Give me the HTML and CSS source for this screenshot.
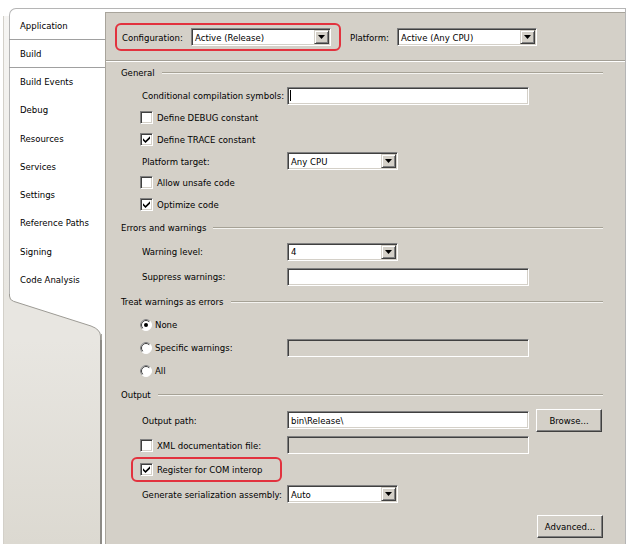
FILE: index.html
```html
<!DOCTYPE html>
<html>
<head>
<meta charset="utf-8">
<link rel="stylesheet" href="styles.css">
</head>
<body>
<div class="window">
  <div class="side">
    <div class="tabwrap">
      <div class="gutter"></div>
      <ul class="tabs">
        <li>Application</li>
        <li class="sel">Build</li>
        <li>Build Events</li>
        <li>Debug</li>
        <li>Resources</li>
        <li>Services</li>
        <li>Settings</li>
        <li>Reference Paths</li>
        <li>Signing</li>
        <li>Code Analysis</li>
      </ul>
    </div>
    <svg class="slant" width="102" height="46" viewBox="0 0 102 46">
      <path d="M0 0 H6.5 V2 Q6.5 6 10.5 7.3 L88 32 Q97.5 35.5 97.5 42 V46 H0 Z" fill="#e8e6e1"/>
      <path d="M6.5 0 V2 Q6.5 6 10.5 7.3 L88 32 Q97.5 35.5 97.5 42 V46" fill="none" stroke="#9d9b95"/>
      <path d="M98.5 40 V46" fill="none" stroke="#a9a7a1"/>
      <path d="M0.5 0 V46" fill="none" stroke="#d3d0c9"/>
    </svg>
    <div class="sidefoot"></div>
  </div>
  <div class="main">
    <div class="panel">
      <div class="toolbar">
        <div class="hl">
          <span class="tlbl cfg">Configuration:</span>
          <div class="box combo w140"><span>Active (Release)</span><i class="arrow"><svg width="7" height="4" viewBox="0 0 7 4"><path d="M0 0 H7 L3.5 4 Z" fill="#000"/></svg></i></div>
        </div>
        <span class="tlbl plat">Platform:</span>
        <div class="box combo w140"><span>Active (Any CPU)</span><i class="arrow"><svg width="7" height="4" viewBox="0 0 7 4"><path d="M0 0 H7 L3.5 4 Z" fill="#000"/></svg></i></div>
      </div>

      <div class="form">
        <div class="sec"><span>General</span><i class="rule"></i></div>
        <div class="row field"><span class="fl">Conditional compilation symbols:</span><div class="box w242"><i class="caret"></i></div></div>
        <div class="row opt"><span class="cb"></span><span>Define DEBUG constant</span></div>
        <div class="row opt"><span class="cb"><svg width="7" height="7" viewBox="0 0 7 7"><polygon points="0,2.3 2.5,4.8 7,0.3 7,2.8 2.5,7 0,4.6" fill="#000"/></svg></span><span>Define TRACE constant</span></div>
        <div class="row field"><span class="fl">Platform target:</span><div class="box combo w111"><span>Any CPU</span><i class="arrow"><svg width="7" height="4" viewBox="0 0 7 4"><path d="M0 0 H7 L3.5 4 Z" fill="#000"/></svg></i></div></div>
        <div class="row opt"><span class="cb"></span><span>Allow unsafe code</span></div>
        <div class="row opt"><span class="cb"><svg width="7" height="7" viewBox="0 0 7 7"><polygon points="0,2.3 2.5,4.8 7,0.3 7,2.8 2.5,7 0,4.6" fill="#000"/></svg></span><span>Optimize code</span></div>

        <div class="sec"><span>Errors and warnings</span><i class="rule"></i></div>
        <div class="row field"><span class="fl">Warning level:</span><div class="box combo w111"><span>4</span><i class="arrow"><svg width="7" height="4" viewBox="0 0 7 4"><path d="M0 0 H7 L3.5 4 Z" fill="#000"/></svg></i></div></div>
        <div class="row field"><span class="fl">Suppress warnings:</span><div class="box w242"></div></div>

        <div class="sec"><span>Treat warnings as errors</span><i class="rule"></i></div>
        <div class="row opt"><svg class="rd" width="12" height="12" viewBox="0 0 12 12"><circle cx="6" cy="6" r="5.5" fill="#fff" stroke="#fff"/><path d="M9.9 2.1 A5.5 5.5 0 0 0 2.1 9.9" fill="none" stroke="#808080"/><path d="M9.2 2.8 A4.5 4.5 0 0 0 2.8 9.2" fill="none" stroke="#404040"/><circle cx="6" cy="6" r="2" fill="#000"/></svg><span>None</span></div>
        <div class="row opt"><span class="optl"><svg class="rd" width="12" height="12" viewBox="0 0 12 12"><circle cx="6" cy="6" r="5.5" fill="#fff" stroke="#fff"/><path d="M9.9 2.1 A5.5 5.5 0 0 0 2.1 9.9" fill="none" stroke="#808080"/><path d="M9.2 2.8 A4.5 4.5 0 0 0 2.8 9.2" fill="none" stroke="#404040"/></svg><span>Specific warnings:</span></span><div class="box dis w242"></div></div>
        <div class="row opt"><svg class="rd" width="12" height="12" viewBox="0 0 12 12"><circle cx="6" cy="6" r="5.5" fill="#fff" stroke="#fff"/><path d="M9.9 2.1 A5.5 5.5 0 0 0 2.1 9.9" fill="none" stroke="#808080"/><path d="M9.2 2.8 A4.5 4.5 0 0 0 2.8 9.2" fill="none" stroke="#404040"/></svg><span>All</span></div>

        <div class="sec"><span>Output</span><i class="rule"></i></div>
        <div class="row field"><span class="fl">Output path:</span><div class="box w242"><span>bin\Release\</span></div><button class="btn browse">Browse...</button></div>
        <div class="row opt"><span class="optl"><span class="cb"></span><span>XML documentation file:</span></span><div class="box dis w242"></div></div>
        <div class="row reg"><div class="hl hl2"><span class="cb"><svg width="7" height="7" viewBox="0 0 7 7"><polygon points="0,2.3 2.5,4.8 7,0.3 7,2.8 2.5,7 0,4.6" fill="#000"/></svg></span><span>Register for COM interop</span></div></div>
        <div class="row field"><span class="fl">Generate serialization assembly:</span><div class="box combo w111"><span>Auto</span><i class="arrow"><svg width="7" height="4" viewBox="0 0 7 4"><path d="M0 0 H7 L3.5 4 Z" fill="#000"/></svg></i></div></div>
        <div class="row last"><button class="btn">Advanced...</button></div>
      </div>
    </div>
  </div>
</div>
</body>
</html>
```

FILE: styles.css
```css
html, body {
  margin: 0;
  padding: 0;
  background: #fff;
}
body {
  width: 628px;
  height: 544px;
  overflow: hidden;
  font-family: "DejaVu Sans Condensed", "Liberation Sans", sans-serif;
  font-size: 9.5px;
  color: #000;
  white-space: nowrap;
}
.window {
  display: flex;
  margin-top: 8px;
  height: 536px;
}

/* ---- left tab strip ---- */
.side {
  width: 102px;
  margin-left: 3px;
  display: flex;
  flex-direction: column;
  background: #fff;
  flex: none;
}
.tabwrap {
  display: flex;
}
.gutter {
  width: 6px;
  box-sizing: border-box;
  border-left: 1px solid #d3d0c9;
  background: linear-gradient(#f6f5f3, #e8e6e1);
  margin-top: 8px;
}
.tabs {
  flex: 1;
  list-style: none;
  margin: 0;
  padding: 2px 0 0;
  border-top: 1px solid #b5b5b5;
  border-left: 1px solid #b5b5b5;
  border-top-left-radius: 7px;
  background: #fff;
}
.tabs li {
  height: 28.25px;
  box-sizing: border-box;
  display: flex;
  align-items: center;
  padding-left: 10px;
}
.tabs li.sel {
  border-top: 1px solid #a0a0a0;
  border-bottom: 1px solid #a0a0a0;
  margin-left: -1px;
  padding-left: 11px;
}
.slant {
  display: block;
  flex: none;
}
.sidefoot {
  flex: 1;
  margin-right: 1px;
  box-sizing: border-box;
  border-left: 1px solid #d3d0c9;
  border-right: 2px solid #8d8b86;
  background: linear-gradient(#e8e6e1, #dcd9d1);
  width: 99px;
}

/* ---- main panel ---- */
.main {
  width: 521px;
  box-sizing: border-box;
  border-top: 1px solid #b5b5b5;
  border-right: 1px solid #b5b5b5;
  padding-top: 3px;
  background: #fff;
  display: flex;
  flex-direction: column;
}
.panel {
  flex: 1;
  background: #d4d0c8;
  border-top: 1px solid #a8a49b;
  border-left: 1px solid #a8a49b;
  display: flex;
  flex-direction: column;
}
.toolbar {
  display: flex;
  align-items: center;
  padding: 10px 0 9px 9px;
  border-bottom: 1px solid #a39f96;
  box-shadow: 0 1px 0 #fff;
}
.hl {
  display: flex;
  align-items: center;
  border: 2px solid #e2323e;
  border-radius: 6px;
  padding: 3px 8px 3px 5px;
}
.tlbl.cfg {
  width: 69px;
}
.tlbl.plat {
  margin-left: 9px;
  width: 47px;
}

.form {
  flex: 1;
  display: grid;
  grid-template-rows: 23px 23px 21px 22px 22px 21px 22px 24px 25px 25px 24px 23px 23px 23px 25px 26px 24px 24px 26px 1fr;
}
.sec {
  display: flex;
  align-items: center;
  padding-left: 15px;
}
.rule {
  flex: 1;
  height: 0;
  border-top: 1px solid #a6a296;
  border-bottom: 1px solid #f4f3f0;
  margin: 1px 22px 0 7px;
}
.row {
  display: flex;
  align-items: center;
}
.field {
  padding-left: 36px;
}
.fl {
  width: 145px;
  flex: none;
}
.opt {
  padding-left: 34px;
}
.optl {
  width: 147px;
  flex: none;
  display: flex;
  align-items: center;
}
.reg {
  padding-left: 25px;
}
.hl2 {
  padding: 4px 18px 4px 7px;
}
.last {
  align-items: flex-start;
  justify-content: flex-end;
  padding-right: 22px;
  padding-top: 8px;
}

/* ---- controls ---- */
.cb {
  width: 13px;
  height: 13px;
  box-sizing: border-box;
  background: #fff;
  border: 1px solid;
  border-color: #808080 #fff #fff #808080;
  box-shadow: inset 1px 1px 0 #404040, inset -1px -1px 0 #d4d0c8;
  margin-right: 4px;
  display: flex;
  align-items: center;
  justify-content: center;
  flex: none;
}
.cb svg {
  display: block;
}
.rd {
  display: block;
  flex: none;
  margin-right: 3px;
}
.box {
  height: 18px;
  box-sizing: border-box;
  background: #fff;
  border: 1px solid;
  border-color: #808080 #fff #fff #808080;
  box-shadow: inset 1px 1px 0 #404040, inset -1px -1px 0 #d4d0c8;
  padding-left: 3px;
  display: flex;
  align-items: center;
  flex: none;
}
.box.dis {
  background: #d4d0c8;
}
.w242 { width: 242px; }
.w140 { width: 140px; }
.w111 { width: 111px; }
.caret {
  width: 1px;
  height: 11px;
  background: #000;
  margin-left: -1px;
}
.combo .arrow {
  margin-left: auto;
  margin-right: 1px;
  width: 15px;
  height: 14px;
  box-sizing: border-box;
  background: #d4d0c8;
  border: 1px solid;
  border-color: #d4d0c8 #404040 #404040 #d4d0c8;
  box-shadow: inset 1px 1px 0 #fff, inset -1px -1px 0 #808080;
  display: flex;
  align-items: center;
  justify-content: center;
}
.combo .arrow svg {
  display: block;
}
.btn {
  width: 66px;
  height: 23px;
  box-sizing: border-box;
  background: #d4d0c8;
  border: 1px solid;
  border-color: #fff #404040 #404040 #fff;
  box-shadow: inset -1px -1px 0 #808080;
  font: inherit;
  color: #000;
  padding: 0;
  flex: none;
}
.browse {
  margin-left: 7px;
}
```
